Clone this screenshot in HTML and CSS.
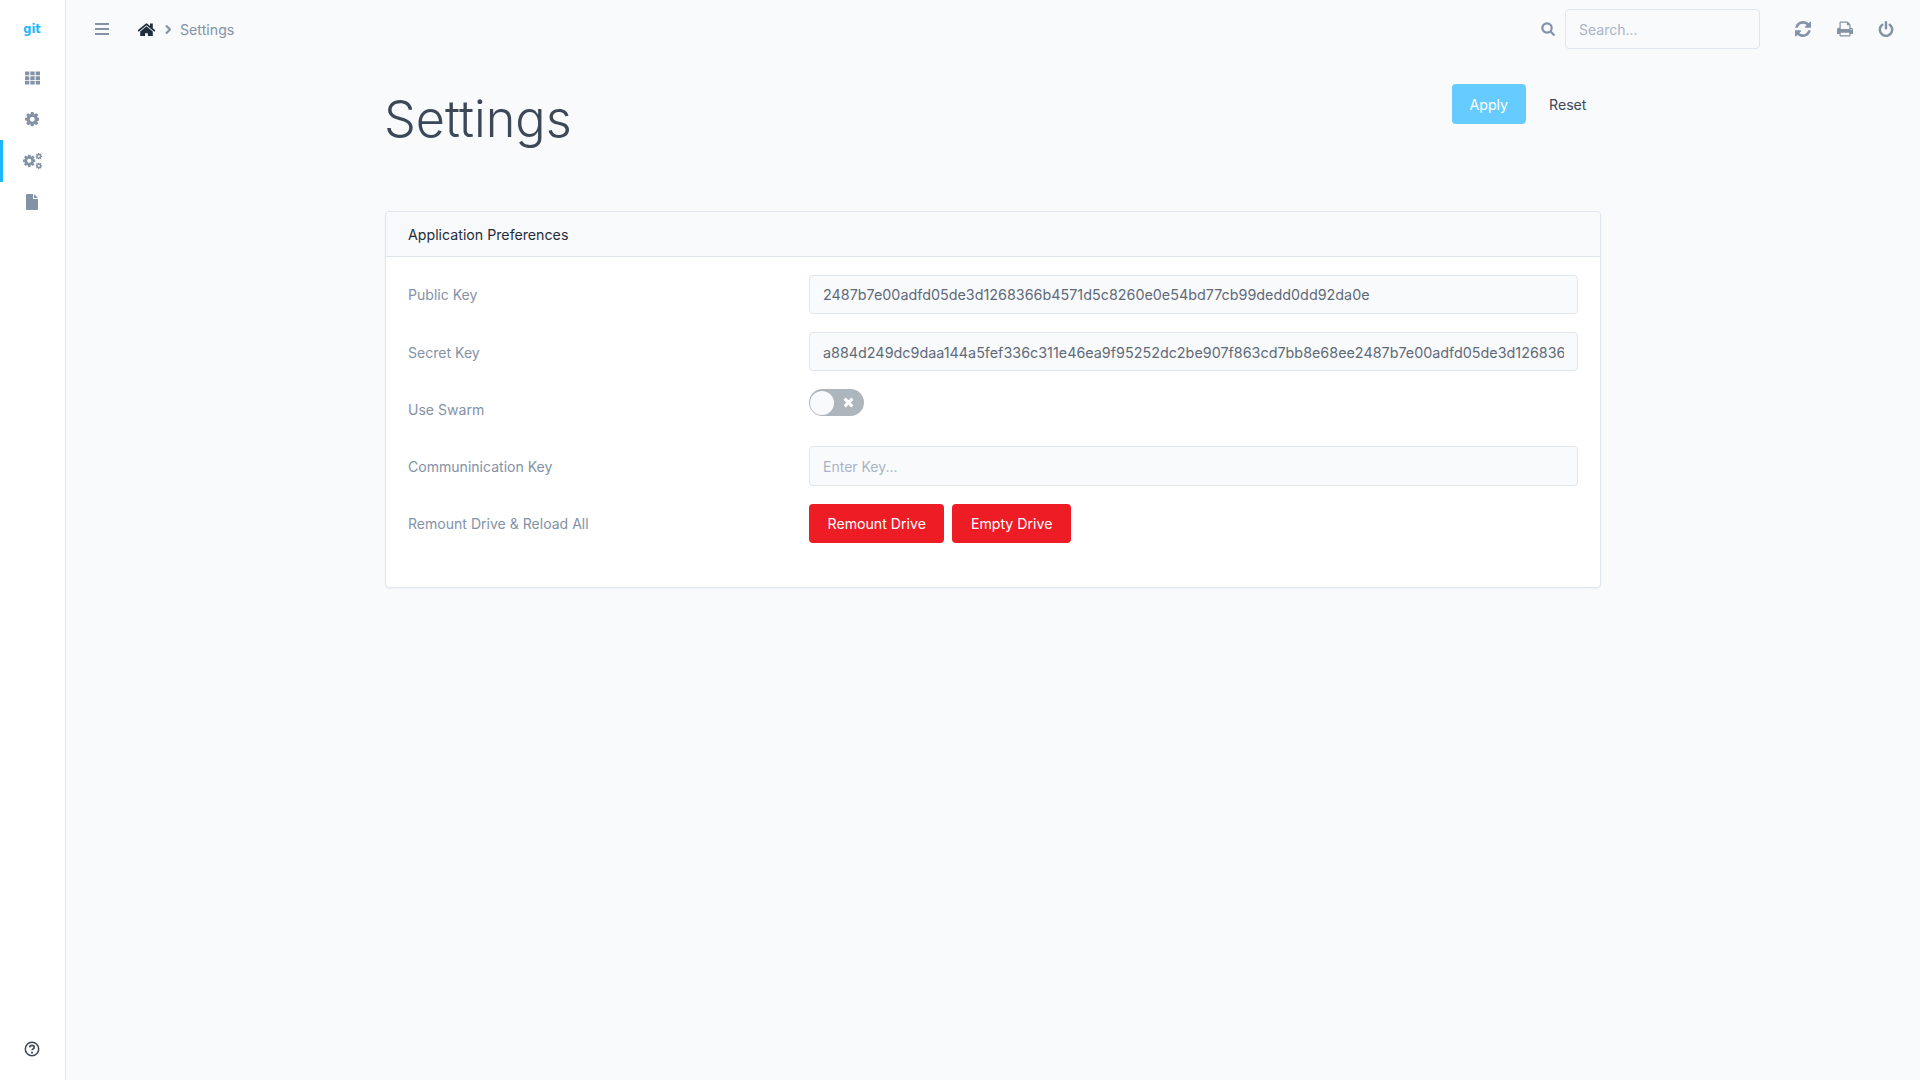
FILE: index.html
```html
<!DOCTYPE html>
<html lang="en">
<head>
<meta charset="utf-8">
<title>Settings</title>
<link rel="stylesheet" href="styles.css">
</head>
<body>
<svg class="defs" width="0" height="0" aria-hidden="true">
  <symbol id="cog" viewBox="128 128 1536 1536"><path d="M1152 896q0-106-75-181t-181-75-181 75-75 181 75 181 181 75 181-75 75-181zm512-109v222q0 12-8 23t-20 13l-185 28q-19 54-39 91 35 50 107 138 10 12 10 25t-9 23q-27 37-99 108t-94 71q-12 0-26-9l-138-108q-44 23-91 38-16 136-29 186-7 28-36 28h-222q-14 0-24.500-8.500t-11.500-21.500l-28-184q-49-16-90-37l-141 107q-10 9-25 9-14 0-25-11-126-114-165-168-7-10-7-23 0-12 8-23 15-21 51-66.500t54-70.500q-27-50-41-99l-183-27q-13-2-21-12.500t-8-23.500v-222q0-12 8-23t19-13l186-28q14-46 39-92-40-57-107-138-10-12-10-24 0-10 9-23 26-36 98.500-107.500t94.500-71.500q13 0 26 10l138 107q44-23 91-38 16-136 29-186 7-28 36-28h222q14 0 24.500 8.500t11.500 21.500l28 184q49 16 90 37l142-107q9-9 24-9 13 0 25 10 129 119 165 170 7 8 7 22 0 12-8 23-15 21-51 66.500t-54 70.500q26 50 41 98l183 28q13 2 21 12.500t8 23.500z"/></symbol>
</svg>
<div class="app">
  <aside class="sidebar">
    <div class="logo">git</div>
    <nav class="nav">
      <a class="nav-item"><svg class="i14" viewBox="0 0 16 14"><path d="M0 0h4.600v4H0zM5.700 0h4.600v4H5.700zM11.400 0H16v4h-4.600zM0 5h4.600v4H0zM5.700 5h4.600v4H5.700zM11.400 5H16v4h-4.600zM0 10h4.600v4H0zM5.700 10h4.600v4H5.700zM11.400 10H16v4h-4.600z"/></svg></a>
      <a class="nav-item"><svg class="cog"><use href="#cog"/></svg></a>
      <a class="nav-item active"><svg class="cogs" viewBox="0 0 19 16"><use href="#cog" x="0" y="1.500" width="12.500" height="12.500"/><use href="#cog" x="12.500" y="0" width="6.500" height="6.500"/><use href="#cog" x="12.500" y="9.500" width="6.500" height="6.500"/></svg></a>
      <a class="nav-item"><svg class="file" viewBox="0 0 12 16"><path d="M0 1q0-1 1-1h6v4.500q0 .5.500.5H12v10q0 1-1 1H1q-1 0-1-1zM8 0l4 4H8z"/></svg></a>
    </nav>
    <a class="help"><svg class="i16" viewBox="0 0 16 16"><circle cx="8" cy="8" r="6.700" class="ring"/><path class="q" d="M5.700 6.300Q5.900 4.400 8 4.400q2.200 0 2.200 1.800 0 1.100-1.100 1.700-1.100.6-1.100 1.400"/><path d="M7.100 10.700h1.800v1.700H7.100z" class="dot"/></svg></a>
  </aside>
  <div class="content">
    <header class="topbar">
      <svg class="bars" viewBox="0 0 14 12"><path d="M0 0h14v2H0zM0 5h14v2H0zM0 10h14v2H0z"/></svg>
      <nav class="crumbs">
        <svg class="home" viewBox="128 128 1536 1280"><path d="M1472 992v480q0 26-19 45t-45 19h-384v-384h-256v384h-384q-26 0-45-19t-19-45v-480q0-1 .5-3t.5-3l575-474 575 474q1 2 1 6zm223-69l-62 74q-8 9-21 11h-3q-13 0-21-7l-692-577-692 577q-12 8-24 7-13-2-21-11l-62-74q-8-10-7-23.500t11-21.500l719-599q32-26 76-26t76 26l244 204v-195q0-14 9-23t23-9h192q14 0 23 9t9 23v408l219 182q10 8 11 21.500t-7 23.500z"/></svg>
        <svg class="chev" viewBox="0 0 6 9"><path d="M1 .5l4 4-4 4" /></svg>
        <span class="crumb">Settings</span>
      </nav>
      <div class="top-right">
        <svg class="search-icon" viewBox="0 0 15 15"><circle cx="6" cy="6" r="4.700"/><path d="M9.500 9.500l4 4"/></svg>
        <input class="search" type="text" placeholder="Search...">
        <div class="top-actions">
          <svg class="i16" viewBox="128 128 1536 1536"><path d="M1639 1056q0 5-1 7-64 268-268 434.500t-478 166.500q-146 0-282.500-55t-243.500-157l-129 129q-19 19-45 19t-45-19-19-45v-448q0-26 19-45t45-19h448q26 0 45 19t19 45-19 45l-137 137q71 66 161 102t187 36q134 0 250-65t186-179q11-17 53-117 8-23 30-23h192q13 0 22.500 9.500t9.500 22.500zm25-800v448q0 26-19 45t-45 19h-448q-26 0-45-19t-19-45 19-45l138-138q-148-137-349-137-134 0-250 65t-186 179q-11 17-53 117-8 23-30 23h-199q-13 0-22.500-9.500t-9.500-22.500v-7q65-268 270-434.500t480-166.500q146 0 284 55.500t245 156.500l130-129q19-19 45-19t45 19 19 45z"/></svg>
          <svg class="i16" viewBox="64 128 1664 1536"><path d="M448 1536h896v-256h-896v256zm0-640h896v-384h-160q-40 0-68-28t-28-68v-160h-640v640zm1152 64q0-26-19-45t-45-19-45 19-19 45 19 45 45 19 45-19 19-45zm128 0v416q0 13-9.500 22.500t-22.500 9.500h-224v160q0 40-28 68t-68 28h-960q-40 0-68-28t-28-68v-160h-224q-13 0-22.500-9.500t-9.500-22.500v-416q0-79 56.500-135.500t135.500-56.500h64v-544q0-40 28-68t68-28h672q40 0 88 20t76 48l152 152q28 28 48 76t20 88v256h64q79 0 135.500 56.500t56.500 135.500z"/></svg>
          <svg class="i16" viewBox="128 0 1536 1664"><path d="M1664 896q0 156-61 298t-164 245-245 164-298 61-298-61-245-164-164-245-61-298q0-182 80.500-343t226.500-270q43-32 95.500-25t83.500 50q32 42 24.500 94.500t-49.500 84.500q-98 74-151.500 181t-53.500 228q0 104 40.500 198.500t109.500 163.500 163.500 109.500 198.500 40.500 198.500-40.500 163.500-109.500 109.500-163.500 40.500-198.500q0-121-53.500-228t-151.500-181q-42-32-49.500-84.500t24.500-94.500q31-43 84-50t95 25q146 109 226.500 270t80.500 343zm-640-768v640q0 52-38 90t-90 38-90-38-38-90v-640q0-52 38-90t90-38 90 38 38 90z"/></svg>
        </div>
      </div>
    </header>
    <main class="page">
      <div class="page-head">
        <h1 class="title">Settings</h1>
        <div class="head-actions">
          <button class="btn btn-apply" type="button">Apply</button>
          <button class="btn btn-reset" type="button">Reset</button>
        </div>
      </div>
      <section class="card">
        <div class="card-header">Application Preferences</div>
        <div class="card-body">
          <div class="label">Public Key</div>
          <input class="field" type="text" value="2487b7e00adfd05de3d1268366b4571d5c8260e0e54bd77cb99dedd0dd92da0e">
          <div class="label">Secret Key</div>
          <input class="field" type="text" value="a884d249dc9daa144a5fef336c311e46ea9f95252dc2be907f863cd7bb8e68ee2487b7e00adfd05de3d126836">
          <div class="label">Use Swarm</div>
          <div class="toggle"><span class="knob"></span><svg class="toggle-x" viewBox="0 0 10 10"><path d="M1.500 1.500l7 7M8.500 1.500l-7 7"/></svg></div>
          <div class="label">Communinication Key</div>
          <input class="field" type="text" placeholder="Enter Key...">
          <div class="label">Remount Drive &amp; Reload All</div>
          <div class="btn-row">
            <button class="btn btn-danger" type="button">Remount Drive</button>
            <button class="btn btn-danger" type="button">Empty Drive</button>
          </div>
        </div>
      </section>
    </main>
  </div>
</div>
</body>
</html>
```
FILE: styles.css
```css
* { box-sizing: border-box; }
html, body { margin: 0; height: 100%; }
body {
  background: #f9fafc;
  font-family: Inter, "Noto Sans", sans-serif;
  font-size: 14px;
  color: #3c4858;
  overflow: hidden;
}
.defs { position: absolute; }
svg { fill: #8492a6; display: block; flex: none; }
.app { display: flex; height: 1080px; }

.sidebar {
  width: 66px;
  flex: none;
  background: #fff;
  border-right: 1px solid #e0e6ed;
  display: flex;
  flex-direction: column;
}
.logo {
  height: 57px;
  display: flex;
  align-items: center;
  justify-content: center;
  padding-right: 1px;
  color: #1fb6ff;
  font-family: "DejaVu Sans", sans-serif;
  font-weight: 700;
  font-size: 11.500px;
}
.nav { display: flex; flex-direction: column; }
.nav-item {
  height: 41.500px;
  display: flex;
  align-items: center;
  justify-content: center;
  border-left: 3px solid transparent;
  padding-right: 4px;
}
.nav-item.active { border-left-color: #1fb6ff; }
.i14 { width: 15px; height: 14px; }
.i16 { width: 16px; height: 16px; }
.cog { width: 14.500px; height: 14.500px; }
.cogs { width: 19px; height: 16px; }
.file { width: 12px; height: 16px; }
.help {
  margin-top: auto;
  height: 62px;
  display: flex;
  align-items: center;
  justify-content: center;
  padding-right: 1px;
}
.help svg { width: 16px; height: 16px; }
.ring { fill: none; stroke: #3c4858; stroke-width: 1.500; }
.q { fill: none; stroke: #3c4858; stroke-width: 1.700; }
.dot { fill: #3c4858; }

.content { flex: 1; min-width: 0; display: flex; flex-direction: column; }
.topbar {
  height: 58px;
  display: flex;
  align-items: center;
  padding: 0 26px 0 28.500px;
}
.bars { width: 14px; height: 12px; }
.crumbs { display: flex; align-items: center; margin-left: 29.500px; }
.home { width: 17px; height: 14px; fill: #1f2d3d; }
.chev { width: 6px; height: 9px; margin-left: 10px; fill: none; stroke: #8492a6; stroke-width: 2.200; }
.crumb { margin-left: 9px; font-size: 14.200px; color: #8492a6; }
.top-right { margin-left: auto; display: flex; align-items: center; }
.search-icon { width: 15px; height: 15px; fill: none; stroke: #8492a6; stroke-width: 2.200; }
.search {
  width: 195px;
  height: 40px;
  margin-left: 9px;
  padding: 0 13px;
  background: transparent;
  border: 1px solid #e0e6ed;
  border-radius: 4px;
  font: 14px Inter, sans-serif;
  color: #3c4858;
  outline: none;
}
.search::placeholder, .field::placeholder { color: #a9b4c4; opacity: 1; }
.field::placeholder { font-size: 14px; }
.top-actions { display: flex; gap: 25.500px; margin-left: 35px; }

.page { width: 1216px; margin: 0 auto; padding-top: 26px; }
.page-head { display: flex; justify-content: space-between; align-items: flex-start; margin-bottom: 59px; height: 68px; }
.title { margin: 0 0 0 -1px; font-size: 50.400px; font-weight: 300; line-height: 69px; color: #3c4858; }
.head-actions { display: flex; gap: 5px; margin-right: -3.500px; }
.btn {
  height: 40px;
  border: 0;
  border-radius: 4px;
  padding: 0 18px;
  font: 14.150px Inter, sans-serif;
  background: transparent;
}
.btn-apply { background: #66ccff; color: #fff; }
.btn-reset { color: #3c4858; }

.card {
  background: #fff;
  border: 1px solid #e0e6ed;
  border-radius: 4px;
  box-shadow: 0 1px 2px rgba(31, 45, 61, .06);
}
.card-header {
  height: 45px;
  padding: 0 22px;
  display: flex;
  align-items: center;
  background: #f8f9fa;
  border-bottom: 1px solid #e0e6ed;
  border-radius: 4px 4px 0 0;
  font-size: 14.200px;
  color: #1f2d3d;
}
.card-body {
  display: grid;
  grid-template-columns: 401px 769px;
  grid-auto-rows: 39.200px;
  row-gap: 18px;
  padding: 17.800px 22px 44px;
}
.label { align-self: center; padding-top: 1px; font-size: 14.050px; color: #8492a6; }
.field {
  height: 100%;
  width: 100%;
  padding: 1px 13px 0;
  background: #f9fafc;
  border: 1px solid #e0e6ed;
  border-radius: 4px;
  font: 14.350px Inter, sans-serif;
  color: #606a78;
  outline: none;
}
.toggle {
  width: 55px;
  height: 27px;
  border-radius: 14px;
  background: #adb5bd;
  display: flex;
  align-items: center;
  padding-left: 1px;
  position: relative;
}
.knob { width: 24px; height: 24px; border-radius: 50%; background: #f9fafc; }
.toggle-x { width: 11px; height: 11px; margin-left: 8.500px; fill: none; stroke: #fff; stroke-width: 2.800; }
.btn-row { display: flex; gap: 8px; }
.btn-danger { background: #ee1c25; color: #fff; height: 100%; padding: 0 18.500px; }
```
